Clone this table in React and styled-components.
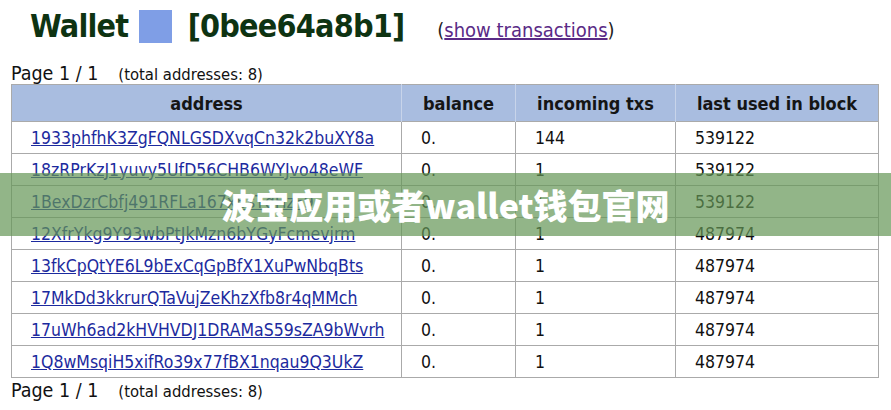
import React from "react";
import styled, { createGlobalStyle } from "styled-components";

const rows = [
  ["1933phfhK3ZgFQNLGSDXvqCn32k2buXY8a", "0.", "144", "539122"],
  ["18zRPrKzJ1yuvy5UfD56CHB6WYJvo48eWF", "0.", "1", "539122"],
  ["1BexDzrCbfj491RFLa167xBsTqHzF9", "0.", "1", "539122"],
  ["12XfrYkg9Y93wbPtJkMzn6bYGyFcmevjrm", "0.", "1", "487974"],
  ["13fkCpQtYE6L9bExCqGpBfX1XuPwNbqBts", "0.", "1", "487974"],
  ["17MkDd3kkrurQTaVujZeKhzXfb8r4qMMch", "0.", "1", "487974"],
  ["17uWh6ad2kHVHVDJ1DRAMaS59sZA9bWvrh", "0.", "1", "487974"],
  ["1Q8wMsqiH5xifRo39x77fBX1nqau9Q3UkZ", "0.", "1", "487974"],
];

export default function App() {
  return (
    <Page>
      <GlobalStyle />
      <TitleRow>
        <Title>
          Wallet <Swatch /> [0bee64a8b1]
        </Title>
        <Aside>
          (<VisitedLink href="#">show transactions</VisitedLink>)
        </Aside>
      </TitleRow>

      <Pager $top="13px">
        Page 1 / 1<Total>(total addresses: 8)</Total>
      </Pager>

      <Table>
        <colgroup>
          <col style={{ width: 390 }} />
          <col style={{ width: 114 }} />
          <col style={{ width: 160 }} />
          <col />
        </colgroup>
        <thead>
          <tr>
            <Th>address</Th>
            <Th>balance</Th>
            <Th>incoming txs</Th>
            <Th>last used in block</Th>
          </tr>
        </thead>
        <tbody>
          {rows.map((r) => (
            <tr key={r[0]}>
              <Td>
                <AddressLink href="#">{r[0]}</AddressLink>
              </Td>
              <Td>{r[1]}</Td>
              <Td>{r[2]}</Td>
              <Td>{r[3]}</Td>
            </tr>
          ))}
        </tbody>
      </Table>

      <Pager>
        Page 1 / 1<Total>(total addresses: 8)</Total>
      </Pager>

      <Banner>波宝应用或者wallet钱包官网</Banner>
    </Page>
  );
}

const GlobalStyle = createGlobalStyle`
  body {
    margin: 0;
    background: #fff;
    font-family: "DejaVu Sans Condensed", "DejaVu Sans", sans-serif;
    color: #111;
  }
`;

const Page = styled.div`
  position: relative;
  width: 891px;
  height: 410px;
  overflow: hidden;
  padding: 0 12px 0 11px;
  box-sizing: border-box;
`;

const TitleRow = styled.div`
  display: flex;
  align-items: center;
  gap: 33px;
  padding: 4px 0 0 19px;
  height: 48px;
  box-sizing: border-box;
`;

const Title = styled.h1`
  margin: 0;
  display: flex;
  align-items: center;
  font-size: 32px;
  font-weight: bold;
  color: #0e3312;
  white-space: pre;
  letter-spacing: -0.8px;
`;

const Swatch = styled.span`
  display: inline-block;
  width: 33px;
  height: 33px;
  background: #7f9ee6;
  margin: 0 6px 0 2px;
`;

const Aside = styled.span`
  font-size: 20px;
  color: #222;
  margin-top: 8px;
`;

const VisitedLink = styled.a`
  color: #5a2a86;
  text-decoration: underline;
`;

const Pager = styled.div`
  font-size: 19.5px;
  color: #111;
  height: 26px;
  line-height: 26px;
  margin-top: ${(p) => p.$top || "0"};
`;

const Total = styled.span`
  font-size: 16.5px;
  margin-left: 20px;
`;

const Table = styled.table`
  width: 868px;
  border-collapse: collapse;
  table-layout: fixed;
  margin-top: -3px;
  border: 1px solid #aaa;
`;

const Th = styled.th`
  background: #a9bde0;
  height: 36px;
  padding: 0;
  font-size: 18px;
  font-weight: 600;
  color: #151515;
  border-left: 1px solid #c8d4ea;
  text-align: center;
  &:first-child {
    border-left: none;
  }
`;

const Td = styled.td`
  height: 31px;
  padding: 0 0 0 19px;
  font-size: 17.5px;
  color: #111;
  border: 1px solid #aaa;
  white-space: nowrap;
  overflow: hidden;
`;

const AddressLink = styled.a`
  color: #1c2a9e;
  text-decoration: underline;
`;

const Banner = styled.div`
  position: absolute;
  left: 0;
  right: 0;
  top: 173px;
  height: 63px;
  display: flex;
  align-items: center;
  justify-content: center;
  background: rgba(100, 150, 85, 0.7);
  color: #fff;
  font-family: "Noto Sans CJK SC", "Noto Sans", sans-serif;
  font-weight: 900;
  font-size: 34px;
`;
